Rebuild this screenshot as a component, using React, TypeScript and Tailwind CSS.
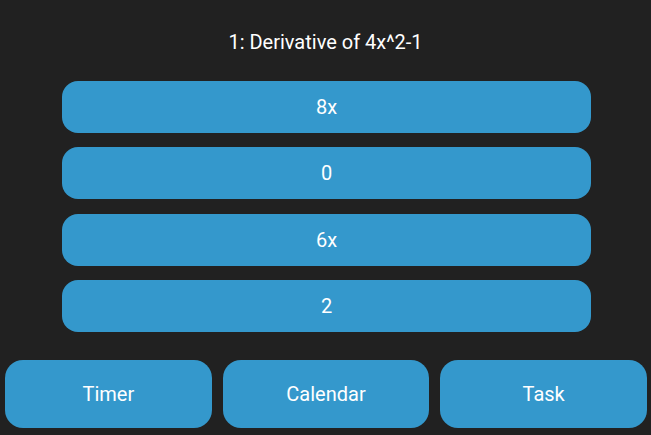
const answers = ["8x", "0", "6x", "2"];
const tabs = ["Timer", "Calendar", "Task"];

export default function App() {
  return (
    <div
      className="w-[651px] h-[435px] bg-[#212121] text-white flex flex-col overflow-hidden"
      style={{ fontFamily: "Roboto, 'Noto Sans', sans-serif" }}
    >
      {/* Question */}
      <div className="pt-[28px] h-[81px] text-center text-[20px] leading-[28px]">
        1: Derivative of 4x^2-1
      </div>

      {/* Answers */}
      <div className="flex flex-col gap-[14.34px] pl-[62px] pr-[60px]">
        {answers.map((a) => (
          <button
            key={a}
            className="h-[52px] rounded-[16px] bg-[#3498cc] text-[20px] text-white flex items-center justify-center"
          >
            {a}
          </button>
        ))}
      </div>

      {/* Bottom nav */}
      <div className="mt-[28px] grid grid-cols-3 gap-[11px] pl-[5px] pr-[4px]">
        {tabs.map((t) => (
          <button
            key={t}
            className="h-[68px] rounded-[18px] bg-[#3498cc] text-[20px] text-white flex items-center justify-center"
          >
            {t}
          </button>
        ))}
      </div>
    </div>
  );
}
